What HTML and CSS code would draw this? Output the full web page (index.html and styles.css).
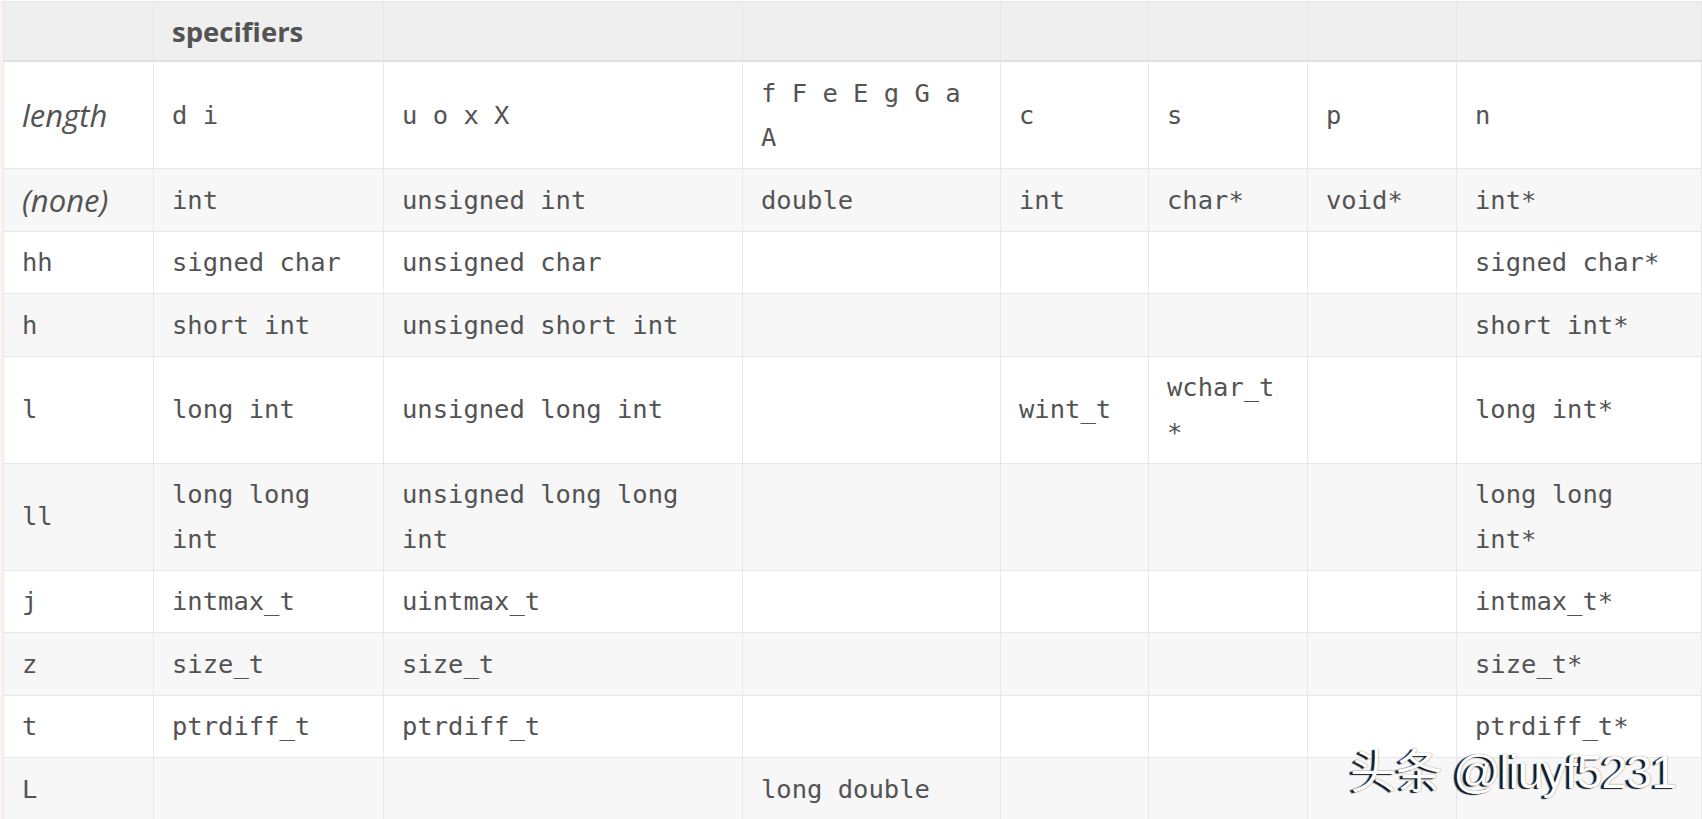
FILE: index.html
```html
<!DOCTYPE html>
<html lang="en">
<head>
<meta charset="utf-8">
<title>printf length specifiers</title>
<link rel="stylesheet" href="styles.css">
</head>
<body>
<div class="page">
  <table class="spec">
    <colgroup>
      <col class="c1"><col class="c2"><col class="c3"><col class="c4">
      <col class="c5"><col class="c6"><col class="c7"><col class="c8">
    </colgroup>
    <thead>
      <tr>
        <th></th><th>specifiers</th><th></th><th></th><th></th><th></th><th></th><th></th>
      </tr>
    </thead>
    <tbody>
      <tr>
        <td class="it">length</td><td>d i</td><td>u o x X</td><td>f F e E g G a A</td><td>c</td><td>s</td><td>p</td><td>n</td>
      </tr>
      <tr>
        <td class="it">(none)</td><td>int</td><td>unsigned int</td><td>double</td><td>int</td><td>char*</td><td>void*</td><td>int*</td>
      </tr>
      <tr>
        <td>hh</td><td>signed char</td><td>unsigned char</td><td></td><td></td><td></td><td></td><td>signed char*</td>
      </tr>
      <tr>
        <td>h</td><td>short int</td><td>unsigned short int</td><td></td><td></td><td></td><td></td><td>short int*</td>
      </tr>
      <tr>
        <td>l</td><td>long int</td><td>unsigned long int</td><td></td><td>wint_t</td><td>wchar_t<br>*</td><td></td><td>long int*</td>
      </tr>
      <tr>
        <td>ll</td><td>long long int</td><td>unsigned long long int</td><td></td><td></td><td></td><td></td><td>long long int*</td>
      </tr>
      <tr>
        <td>j</td><td>intmax_t</td><td>uintmax_t</td><td></td><td></td><td></td><td></td><td>intmax_t*</td>
      </tr>
      <tr>
        <td>z</td><td>size_t</td><td>size_t</td><td></td><td></td><td></td><td></td><td>size_t*</td>
      </tr>
      <tr>
        <td>t</td><td>ptrdiff_t</td><td>ptrdiff_t</td><td></td><td></td><td></td><td></td><td>ptrdiff_t*</td>
      </tr>
      <tr>
        <td>L</td><td></td><td></td><td>long double</td><td></td><td></td><td></td><td></td>
      </tr>
    </tbody>
  </table>
  <div class="watermark">头条 @liuyf5231</div>
</div>
</body>
</html>
```

FILE: styles.css
```css
html, body {
  margin: 0;
  padding: 0;
  background: #ffffff;
}

.page {
  position: relative;
  border-left: 3px solid #fbf4ec;
  padding-top: 1px;
  min-height: 818px;
}

.spec {
  border-collapse: collapse;
  table-layout: fixed;
  width: 1698px;
  color: #535353;
}

.c1 { width: 150px; }
.c2 { width: 230px; }
.c3 { width: 359px; }
.c4 { width: 258px; }
.c5 { width: 148px; }
.c6 { width: 159px; }
.c7 { width: 149px; }
.c8 { width: 245px; }

.spec th,
.spec td {
  border: 1px solid #e7e7e7;
  padding: 8.5px 18px;
  text-align: left;
  vertical-align: middle;
}

.spec td {
  font-family: "DejaVu Sans Mono", "Liberation Mono", monospace;
  font-size: 25.5px;
  line-height: 44.5px;
}

.spec th {
  font-family: "Open Sans", "Noto Sans", sans-serif;
  font-weight: 700;
  font-size: 27.5px;
  line-height: 41px;
  background: #efefef;
  border-bottom: 2px solid #e0e0e0;
}

.spec tbody tr:nth-child(even) {
  background: #f7f7f7;
}

.spec td.it {
  font-family: "Open Sans", "Noto Sans", sans-serif;
  font-style: italic;
  font-size: 31px;
}

.watermark {
  position: absolute;
  left: 1347px;
  top: 748px;
  font-family: "Liberation Sans", "Noto Sans CJK SC", sans-serif;
  font-size: 47px;
  line-height: 1;
  letter-spacing: -1.3px;
  color: #ffffff;
  text-shadow: -3px 1px 1px rgba(0, 0, 0, 0.9), 0 0 1px rgba(0, 0, 0, 0.7);
  white-space: nowrap;
}
```
